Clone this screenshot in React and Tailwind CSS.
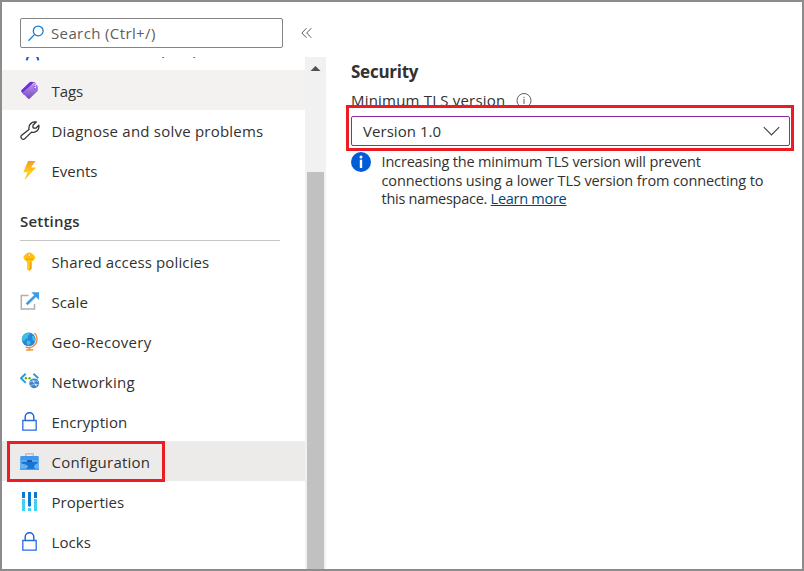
import React from "react";

function PersonIcon() {
  return (
    <svg width="20" height="22" viewBox="0 0 20 22" fill="none">
      <circle cx="9" cy="7" r="4" fill="#50a8f0" />
      <path d="M6.800 21.300q.3-3 2.200-4.500M18.300 21.300q-.3-3-2.200-4.500" stroke="#1a5fdb" strokeWidth="2" />
    </svg>
  );
}

function TagIcon() {
  return (
    <svg width="20" height="20" viewBox="0 0 20 20">
      <defs>
        <linearGradient id="tag" x1="0" y1="0" x2="0" y2="1">
          <stop offset="0" stopColor="#b796f0" />
          <stop offset="1" stopColor="#7547bd" />
        </linearGradient>
      </defs>
      <path d="M1.300 9.200 9.600 1.300Q10.300.7 11.200.8L15 1.600l1 2L4 14 1.300 10.500Q.9 9.800 1.300 9.200Z" fill="#6f2fd6" />
      <path d="M3 11.200 12 3.300Q12.700 2.700 13.600 2.900L16.800 3.800Q17.600 4.100 17.700 5L18 8.800Q18 9.700 17.400 10.300L9.500 17.800Q8.800 18.400 8.200 17.700L3 12.500Q2.400 11.800 3 11.200Z" fill="url(#tag)" />
      <circle cx="15.200" cy="6.600" r="1.400" fill="#f3edff" stroke="#6f2fd6" strokeWidth=".8" />
      <path d="M12.300 3.200q2-1.700 3.200.2v2" fill="none" stroke="#dfcfff" strokeWidth="1" />
    </svg>
  );
}

function WrenchIcon() {
  return (
    <svg width="20" height="20" viewBox="0 0 20 20" fill="none" stroke="#323130" strokeWidth="1.300" strokeLinejoin="round">
      <path d="M9 8.500C8.200 4 11.500.1 16.300 1L13 4.200v2.500l1 .5h1.800l3-3c.9 4.500-2.800 8-7.300 6.900L5.100 17.400c-2.400 2.400-5.700-.8-3.400-3.100z" />
    </svg>
  );
}

function BoltIcon() {
  return (
    <svg width="20" height="20" viewBox="0 0 20 20">
      <defs>
        <linearGradient id="bolt" x1="0" y1="0" x2="0" y2="1">
          <stop offset="0" stopColor="#f99a20" />
          <stop offset=".6" stopColor="#ffcf18" />
          <stop offset="1" stopColor="#ffb21c" />
        </linearGradient>
      </defs>
      <path d="M8 0h7.500L11 6.500h5L4.500 19 7.600 11.300H3.300z" fill="url(#bolt)" />
    </svg>
  );
}

function KeyIcon() {
  return (
    <svg width="20" height="20" viewBox="0 0 20 20">
      <path d="M6.300 1.500Q9.200-.5 12.200 1.500L14.500 3.700Q16 5.500 14.500 7.200L11.800 9.900v6.500L9.400 19.200 7 17V9.900L4.100 7.200Q2.600 5.500 4.100 3.700z" fill="#ffc50f" />
      <path d="M9.800 10.500h1.600v6.200l-1.600 2z" fill="#f2a30c" />
      <path d="M5.600 6.600h7.500v1H5.600z" fill="#e59a0a" />
      <circle cx="9.300" cy="3" r="1.300" fill="#fff" stroke="#df8d05" strokeWidth=".6" />
      <path d="M8 11v5" stroke="#ffd95b" strokeWidth=".8" />
    </svg>
  );
}

function ScaleIcon() {
  return (
    <svg width="20" height="20" viewBox="0 0 20 20" fill="none">
      <path d="M8.500 3.500H1.300v13.600h13.200v-5" stroke="#b0b0b0" strokeWidth="1.500" />
      <path d="M6.700 12.300 15.500 3.600" stroke="#3c9ce9" strokeWidth="2.700" />
      <path d="M11.300.3H19V8z" fill="#3c9ce9" />
    </svg>
  );
}

function GlobeIcon() {
  return (
    <svg width="20" height="20" viewBox="0 0 20 20">
      <path d="M14.500 1C18 4.300 18 9.800 14.500 13.300Q11 16.800 5.500 15.200" fill="none" stroke="#f08a3c" strokeWidth="1.400" />
      <circle cx="8.700" cy="7.300" r="6.900" fill="#2585dc" />
      <path d="M3 3.300Q5.500.6 9 .7l1.200 1.500-2.400 1.800.5 2-2.500.8-1.800 2.500-2-1Q1.700 5.500 3 3.300ZM7 8.200l3 .9.800 2-2.300 2.700-2-2.500ZM12 3.700l2.300.2Q15.800 6.500 15 9.700l-2.300-1.800Z" fill="#43bfdc" />
      <path d="M8.700 15.800h1.800v1.500h2.800v1.500H6v-1.500h2.700z" fill="#f0954c" />
    </svg>
  );
}

function NetworkIcon() {
  return (
    <svg width="20" height="20" viewBox="0 0 20 20" fill="none">
      <path d="M5.700 1.700 1 6.200l4.700 4.700M13.500 1.700 18.300 6.200" stroke="#21a0df" strokeWidth="2" />
      <circle cx="5.900" cy="6.300" r="1.200" fill="#65ad20" />
      <circle cx="9.600" cy="6.300" r="1.200" fill="#65ad20" />
      <circle cx="14.200" cy="11.300" r="4.900" fill="#3c83c7" />
      <path d="M10 10q4-2.500 8-.5M10 13.700q4-2 8.500-1.300M12 7.500l4.500 7" stroke="#a9d6f5" strokeWidth=".8" />
      <circle cx="13.600" cy="9.700" r=".9" fill="#d4edff" />
      <circle cx="15.900" cy="12.900" r=".9" fill="#d4edff" />
    </svg>
  );
}

function LockIcon() {
  return (
    <svg width="20" height="20" viewBox="0 0 20 20" fill="none">
      <path d="M2.800 8.500h13.400v9.700H2.800z" stroke="#2b6ede" strokeWidth="1.300" />
      <path d="M5.200 8V5a4.300 4.300 0 0 1 8.600 0v3" stroke="#1a5fdb" strokeWidth="1.400" />
    </svg>
  );
}

function ToolboxIcon() {
  return (
    <svg width="20" height="20" viewBox="0 0 20 20">
      <path d="M5.700 4.500V2.400q0-.6.700-.6h6.200q.7 0 .7.600v2.100" fill="none" stroke="#b5b5b5" strokeWidth="1.200" />
      <path d="M.5 4h18l.5 5H0z" fill="#3f97ee" />
      <path d="M0 8.700h19V17.500H0z" fill="#6ab1f6" />
      <path d="M1.500 9.800h16.200v1.500q-3.700 1.500-3.700 3.500l1.200 2.200H6l2-2.300-1-1.800L1.500 11.500z" fill="#1776d2" />
      <path d="M0 7.900h19v1.200H0z" fill="#5eaaf3" />
      <path d="M7 8.200h5v1.700H7z" fill="#174d86" />
      <path d="M0 16.700h19v1H0z" fill="#298ce2" />
    </svg>
  );
}

function PropertiesIcon() {
  return (
    <svg width="20" height="20" viewBox="0 0 20 20">
      <path d="M2 0h3v6H2zM8 0h3v14q-1.500 1.500-3 0zM14 0h3v6h-3z" fill="#0b78d2" />
      <path d="M2 7h3v12H2zM8 16h3v3H8zM14 7h3v12h-3z" fill="#43cfee" />
    </svg>
  );
}

function Row({ icon, label, track, active = "", pad = "pt-[2px]" }) {
  return (
    <div className={"flex h-10 shrink-0 items-center gap-[11.500px] pl-[18px] " + pad + " " + active}>
      <span className="size-5 shrink-0">{icon}</span>
      <span className={"whitespace-nowrap leading-5 " + track}>{label}</span>
    </div>
  );
}

function Sidebar() {
  return (
    <aside className="flex w-[324px] shrink-0 flex-col">
      <div className="flex h-[55px] shrink-0 items-start pl-[18px] pt-4">
        <div className="flex h-[30px] w-[263px] items-center gap-[6.500px] rounded-[2px] border border-[#858483] pl-[6.500px]">
          <svg width="17" height="17" viewBox="0 0 17 17" fill="none" stroke="#0f7bd3" strokeWidth="1.250">
            <circle cx="10.200" cy="5.900" r="4.900" />
            <path d="M6.700 9.400.4 15.700" />
          </svg>
          <span className="text-[#605e5c] tracking-[0.38px]">Search (Ctrl+/)</span>
        </div>
        <svg className="ml-[18px] mt-[9px]" width="12" height="12" viewBox="0 0 12 12" fill="none" stroke="#605e5c">
          <path d="M5.500 1.200.9 6l4.600 4.800M10.300 1.200 5.700 6l4.600 4.800" />
        </svg>
      </div>
      <div className="flex h-[512px] overflow-hidden">
        <nav className="flex w-[303px] flex-col overflow-hidden">
          <div className="-mt-[27px] flex flex-col">
            <Row icon={<PersonIcon />} label="Access control (IAM)" track="tracking-[0.3px]" pad="pb-[2px]" />
            <Row icon={<TagIcon />} label="Tags" active="bg-[#f3f2f1]" track="tracking-[-0.1px]" />
            <Row icon={<WrenchIcon />} label="Diagnose and solve problems" track="tracking-[0.22px]" />
            <Row icon={<BoltIcon />} label="Events" track="tracking-[0px]" />
            <div className="ml-[18px] h-[51px] w-[260px] border-b border-[#c8c6c4] pt-[21px]">
              <h2 className="font-semibold leading-5 tracking-[0.2px]">Settings</h2>
            </div>
            <div className="flex flex-col">
              <Row icon={<KeyIcon />} label="Shared access policies" track="tracking-[0.13px]" />
              <Row icon={<ScaleIcon />} label="Scale" track="tracking-[0.1px]" />
              <Row icon={<GlobeIcon />} label="Geo-Recovery" track="tracking-[0.28px]" />
              <Row icon={<NetworkIcon />} label="Networking" track="tracking-[0.25px]" />
              <Row icon={<LockIcon />} label="Encryption" track="tracking-[0.1px]" />
              <div className="relative">
                <Row icon={<ToolboxIcon />} label="Configuration" active="bg-[#edebe9]" track="tracking-[0.24px]" />
                <div className="absolute left-[5px] top-0 h-[41px] w-[158px] border-[3px] border-[#ed1c24]" />
              </div>
              <Row icon={<PropertiesIcon />} label="Properties" track="tracking-[0px]" />
              <Row icon={<LockIcon />} label="Locks" track="tracking-[0.1px]" />
            </div>
          </div>
        </nav>
        <div className="flex w-[21px] flex-col items-center bg-[#f1f1f1]">
          <svg width="21" height="115" viewBox="0 0 21 115" className="shrink-0">
            <path d="M5.500 14 10.500 9l5 5z" fill="#505050" />
          </svg>
          <div className="w-[17px] grow bg-[#c1c1c1]" />
        </div>
      </div>
    </aside>
  );
}

function SecurityPane() {
  return (
    <main className="flex grow flex-col pl-[25px] pt-[59px]">
      <h1 className="text-[17px] font-bold leading-[22px] tracking-[-0.25px]">Security</h1>
      <div className="mt-[7px] flex h-5 items-center gap-[11px]">
        <span className="tracking-[0.2px]">Minimum TLS version</span>
        <svg width="16" height="16" viewBox="0 0 16 16" fill="none" stroke="#605e5c">
          <circle cx="8" cy="8.500" r="7" />
          <path d="M8 7v5M8 4.800v1.300" />
        </svg>
      </div>
      <div className="relative mt-[6px] w-[439px]">
        <div className="flex h-[30px] items-center justify-between rounded-[2px] border border-[#8a2da5] pl-[11px] pr-[9.500px]">
          <span className="tracking-[0.05px]">Version 1.0</span>
          <svg width="17" height="10" viewBox="0 0 17 10" fill="none" stroke="#484644" strokeWidth="1.200">
            <path d="M.8 1.100 8.500 8.800 16.200 1.100" />
          </svg>
        </div>
        <div className="absolute -left-[5px] -top-[11px] h-[46px] w-[448px] border-[3px] border-[#ed1c24]" />
      </div>
      <div className="mt-[6px] flex gap-[10.500px]">
        <svg width="20" height="20" viewBox="0 0 20 20" className="shrink-0">
          <circle cx="10" cy="10" r="10" fill="#015cda" />
          <circle cx="10" cy="4.900" r="1.500" fill="#fff" />
          <path d="M8.800 7.700h2.400V16H8.800z" fill="#fff" />
        </svg>
        <p className="whitespace-nowrap pt-px text-[14.500px] leading-[18.700px]">
          <span className="block tracking-[-0.17px]">Increasing the minimum TLS version will prevent</span>
          <span className="block tracking-[-0.11px]">connections using a lower TLS version from connecting to</span>
          <span className="block tracking-[-0.27px]">
            this namespace. <a className="text-[#004578] underline">Learn more</a>
          </span>
        </p>
      </div>
    </main>
  );
}

export default function App() {
  return (
    <div className="flex h-[571px] w-[804px] overflow-hidden border-2 border-[#8c8c8c] bg-white font-['Open_Sans','Noto_Sans',sans-serif] text-[15px] leading-5 text-[#323130]">
      <Sidebar />
      <SecurityPane />
    </div>
  );
}
